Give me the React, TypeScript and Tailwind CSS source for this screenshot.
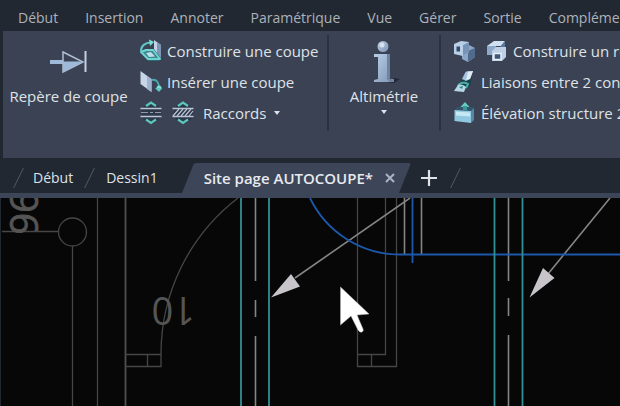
import type { ReactNode } from "react";

const menus = ["Début", "Insertion", "Annoter", "Paramétrique", "Vue", "Gérer", "Sortie", "Compléments"];

function CutMarkIcon() {
  return (
    <svg width="38" height="24" viewBox="0 0 38 24" aria-hidden="true">
      <path d="M0 12h13" stroke="#9fb9d8" strokeWidth="4" />
      <path d="M13 2l20 10-20 10z" fill="#3b4253" stroke="#aebed3" strokeWidth="1.500" />
      <path d="M13 11.500h20L13 22z" fill="#9fb9d8" />
      <path d="M35.500 1v21" stroke="#c6d1e0" strokeWidth="2" />
    </svg>
  );
}

function BuildSectionIcon() {
  return (
    <svg width="24" height="24" viewBox="0 0 24 24" aria-hidden="true">
      <path d="M15 1l7 5v14l-7-8z" fill="#c3d0e3" />
      <path d="M18 3l4 3v14l-4-4z" fill="#7f95b5" />
      <path d="M1 13l6-3h8l7 9-2 3H9z" fill="#2c6c78" />
      <path d="M2 13l5-2h7l7 9H9z" fill="#3b8791" stroke="#6fd3d0" strokeWidth="2" strokeLinejoin="round" />
      <path d="M7 14l5-1 4 4.500-6 .5z" fill="#c0dbe8" />
      <path d="M2 12C2 7 6 3.500 12 3.500" fill="none" stroke="#5fc6c3" strokeWidth="2" />
      <path d="M10 .5l5 2.500-4 4z" fill="#7be0da" />
    </svg>
  );
}

function InsertSectionIcon() {
  return (
    <svg width="24" height="24" viewBox="0 0 24 24" aria-hidden="true">
      <path d="M1.500 1l11 8v13l-11-8z" fill="#c8d5e6" />
      <path d="M8 6l4.500 3v13L8 19z" fill="#9eb3cf" />
      <path d="M13 10c5-1 7 3 7 8" fill="none" stroke="#4aa9ad" strokeWidth="2" />
      <circle cx="20" cy="18" r="2.500" fill="#7be0da" />
      <path d="M16 18h7l-3 4z" fill="#5fc6c3" />
    </svg>
  );
}

function FittingIcon({ hatched = false }: { hatched?: boolean }) {
  return (
    <svg width="24" height="24" viewBox="0 0 24 24" aria-hidden="true">
      <circle cx="12.500" cy="12" r="10" fill="#2f3848" />
      <path d="M7 5l5-3.500L17 5M7 18.500l5 3.500 5-3.500" fill="none" stroke="#5bc7bf" strokeWidth="2.200" />
      <path d="M1.500 7.500h21M1.500 15.500h21" stroke="#b9c5d6" strokeWidth="1.600" />
      {hatched ? (
        <path d="M2 15l6-7M6 15l6-7M10 15l6-7M14 15l6-7M18 15l4-5" stroke="#b9c5d6" strokeWidth="1.200" />
      ) : (
        <path d="M2 11.500h20" stroke="#8c9bb0" strokeWidth="1.200" strokeDasharray="7 2 3 2" />
      )}
    </svg>
  );
}

function InfoIcon() {
  return (
    <svg width="34" height="44" viewBox="0 0 34 44" aria-hidden="true">
      <defs>
        <linearGradient id="info" x1="0" y1="0" x2="1" y2="1">
          <stop offset="0" stopColor="#b8cee6" />
          <stop offset="1" stopColor="#7e95b5" />
        </linearGradient>
      </defs>
      <path d="M20 42l7-4 6 1-6 4z" fill="#222936" />
      <circle cx="16" cy="6.500" r="5.500" fill="url(#info)" />
      <circle cx="15" cy="5" r="2.500" fill="#d8e2ee" />
      <path d="M7 14h16v25h4v3H7v-2l4-1V17H7z" fill="url(#info)" />
      <path d="M20 14h3v25h4v3h-4l-3-3z" fill="#6e83a2" />
    </svg>
  );
}

function CubesIcon() {
  return (
    <svg width="24" height="24" viewBox="0 0 24 24" aria-hidden="true">
      <path d="M9 11l7-5 6 3v9l-7 5-6-3z" fill="#8ba6c8" />
      <path d="M15 12l7-3v9l-7 5z" fill="#526b8c" />
      <path d="M1 5l7-3 8 1v10l-6 4-9-2z" fill="#b9cfe8" />
      <path d="M10 6l6-3v10l-6 4z" fill="#7794b7" />
      <path d="M3.500 7.500h3.500v5H3.500z" fill="#334966" />
    </svg>
  );
}

function CubePlanIcon() {
  return (
    <svg width="24" height="24" viewBox="0 0 24 24" aria-hidden="true">
      <path d="M2 7l7-5h11l-4 5z" fill="#d0e2f2" />
      <path d="M2 7h9v9H2z" fill="#8eaacb" />
      <path d="M15 8l5-6v8h-5z" fill="#59799f" />
      <path d="M7 12l4-4h10v10l-4 4H7z" fill="#bdd0e5" />
      <path d="M9 14.500h7v6H9z" fill="#3f5776" stroke="#e7eff8" strokeWidth="1.500" />
    </svg>
  );
}

function DuctLinkIcon() {
  return (
    <svg width="24" height="24" viewBox="0 0 24 24" aria-hidden="true">
      <path d="M7 13l3-5 9-1-2 9-6 3z" fill="#17424a" />
      <path d="M9 9l3-6c1-2 3-2 8-2l-3 8-4 2z" fill="#a6c3de" />
      <path d="M15 2l5-1-3 8-4 1z" fill="#dfebf5" />
      <path d="M5 16c2-4 7-4 10-2l-2 4" fill="none" stroke="#4aaca6" strokeWidth="2" />
      <path d="M1 21l4-6c3-1 6 0 8 2l-2 5z" fill="#b4d8e6" />
      <path d="M6 17l4-1-1 3z" fill="#2f8585" />
    </svg>
  );
}

function ElevationIcon() {
  return (
    <svg width="24" height="24" viewBox="0 0 24 24" aria-hidden="true">
      <path d="M1.500 9l3-3h17l-3 4z" fill="#31566a" />
      <path d="M12 1l4.500 5h-9z" fill="#65cdc3" />
      <path d="M10 5h4v4h-4z" fill="#3d9995" />
      <path d="M1.500 9L18 10v12L1.500 20z" fill="#8fc8e0" />
      <path d="M18 10l3-3v12l-3 3z" fill="#5588a2" />
      <path d="M3 10.500l14 1v4L3 14.500z" fill="#c6e8f3" />
    </svg>
  );
}

function Caret() {
  return <span className="border-x-[3px] border-t-4 border-x-transparent border-t-[#dfe2e8]" />;
}

function RibbonButton({ icons, children }: { icons: ReactNode; children: ReactNode }) {
  return (
    <button className="flex h-[31px] items-center gap-1 whitespace-nowrap">
      {icons}
      {children}
    </button>
  );
}

function Slash() {
  return <span className="h-5 w-px -skew-x-[26deg] bg-[#505969]" aria-hidden="true" />;
}

function Drawing() {
  return (
    <svg
      className="block size-full"
      viewBox="1 0 619 208"
      preserveAspectRatio="xMinYMin slice"
      fill="none"
      role="img"
      aria-label="Dessin"
    >
      <g stroke="#464646" strokeWidth="1.300">
        <path d="M2 33.500h56M72.500 48v160M97.500 0v208" />
        <circle cx="72.500" cy="34" r="14" />
        <path d="M125.500 0v208" stroke="#505050" strokeWidth="1.800" />
        <path d="M125 156.500h36M125 168.500h36v-12A196.500 196.500 0 0 1 238 0M147.500 156v12" />
        <path d="M357.500 0v168.500h39V0M385.500 0v156.500h-28M371.500 156v12" />
      </g>
      <g fill="#555" fontFamily="'Open Sans', 'Noto Sans', sans-serif" fontSize="38">
        <text transform="translate(195 99) rotate(180)">10</text>
        <text transform="translate(10 -7) rotate(90)" stroke="#555" strokeWidth=".8">
          96
        </text>
      </g>
      <g stroke="#858585" strokeWidth="1.600">
        <path d="M255.500 0v83M255.500 102v17M255.500 138v70" />
        <path d="M508.500 0v83M508.500 100v18M508.500 137v71" />
        <path d="M404.500 0v56M421.500 0v56" />
        <path d="M410 0L295 80M610 0l-62 76" />
      </g>
      <path d="M310 0A100 100 0 0 0 400 56.500H620M412.500 0v65" stroke="#1d58ac" strokeWidth="1.800" />
      <path d="M241 0v208M269 0v208M494.500 0v208M522.500 0v208" stroke="#319095" strokeWidth="1.800" />
      <path d="M271 99.500L291 76l9 12.500zM529.500 99.500L543 70l11.500 10z" fill="#c7c5c9" />
      <path
        d="M340.500 89v38l10.500-9 7 14q2 3 4 2 2-1 1-3l-6-14 12-1z"
        fill="#fff"
        stroke="#b8b8b8"
        strokeWidth=".5"
      />
    </svg>
  );
}

export default function App() {
  return (
    <div className="flex min-h-screen flex-col overflow-hidden bg-[#212832] font-['Open_Sans','Noto_Sans',sans-serif] text-[15px] leading-5 text-[#dfe2e8]">
      <nav className="flex h-[31px] items-center gap-[27px] pt-1 pl-[18px] text-sm text-[#adb2b9]">
        {menus.map((menu) => (
          <button key={menu} className="whitespace-nowrap">
            {menu}
          </button>
        ))}
      </nav>

      <main className="flex grow flex-col">
        <div className="ml-[3px] flex h-[127px] bg-[#3b4253] pt-1">
          <section className="flex h-24 w-[326px] shrink-0 border-r-2 border-[#2b323f]">
            <button className="flex w-[131px] flex-col items-center gap-3 pt-[15px] whitespace-nowrap">
              <CutMarkIcon />
              Repère de coupe
            </button>
            <div className="ml-[5px]">
              <RibbonButton icons={<BuildSectionIcon />}>Construire une coupe</RibbonButton>
              <RibbonButton icons={<InsertSectionIcon />}>Insérer une coupe</RibbonButton>
              <div className="flex h-[31px] items-center gap-2">
                <button aria-label="Raccord simple">
                  <FittingIcon />
                </button>
                <button aria-label="Raccord hachuré">
                  <FittingIcon hatched />
                </button>
                <button className="flex items-center gap-2">
                  Raccords
                  <Caret />
                </button>
              </div>
            </div>
          </section>

          <section className="flex h-24 w-28 shrink-0 justify-center border-r-2 border-[#2b323f]">
            <button className="flex flex-col items-center self-start pt-[5px]">
              <InfoIcon />
              <span className="mt-[2px] mb-1">Altimétrie</span>
              <Caret />
            </button>
          </section>

          <section className="ml-3 min-w-0 grow overflow-hidden">
            <RibbonButton
              icons={
                <span className="flex gap-2">
                  <CubesIcon />
                  <CubePlanIcon />
                </span>
              }
            >
              Construire un réseau
            </RibbonButton>
            <RibbonButton icons={<DuctLinkIcon />}>Liaisons entre 2 conduites</RibbonButton>
            <RibbonButton icons={<ElevationIcon />}>Élévation structure 2D</RibbonButton>
          </section>
        </div>

        <div className="flex h-10 items-center border-b-[5px] border-[#3d4559] pt-[5px] pl-[18px]">
          <Slash />
          <button className="ml-[14px] text-sm">Début</button>
          <span className="ml-4 flex">
            <Slash />
          </span>
          <button className="ml-4 text-sm">Dessin1</button>
          <div className="relative isolate ml-[30px] flex h-[30px] items-center gap-3 pr-[10px] pl-4 font-semibold text-[#e8eaee] before:absolute before:inset-0 before:-z-10 before:-skew-x-[22deg] before:rounded-t-xs before:bg-[#3d4559]">
            <button className="whitespace-nowrap">Site page AUTOCOUPE*</button>
            <button aria-label="Fermer l'onglet">
              <svg width="10" height="10" viewBox="0 0 10 10" stroke="#a9b4c4" strokeWidth="2">
                <path d="M1 1l8 8M9 1L1 9" />
              </svg>
            </button>
          </div>
          <button className="ml-4" aria-label="Nouvel onglet">
            <svg width="16" height="16" viewBox="0 0 16 16" stroke="#dfe2e8" strokeWidth="2.200">
              <path d="M0 8h16M8 0v16" />
            </svg>
          </button>
          <span className="ml-[18px] flex">
            <Slash />
          </span>
        </div>

        <section className="relative ml-px h-52 grow bg-[#070707]">
          <div className="absolute inset-0">
            <Drawing />
          </div>
        </section>
      </main>
    </div>
  );
}
